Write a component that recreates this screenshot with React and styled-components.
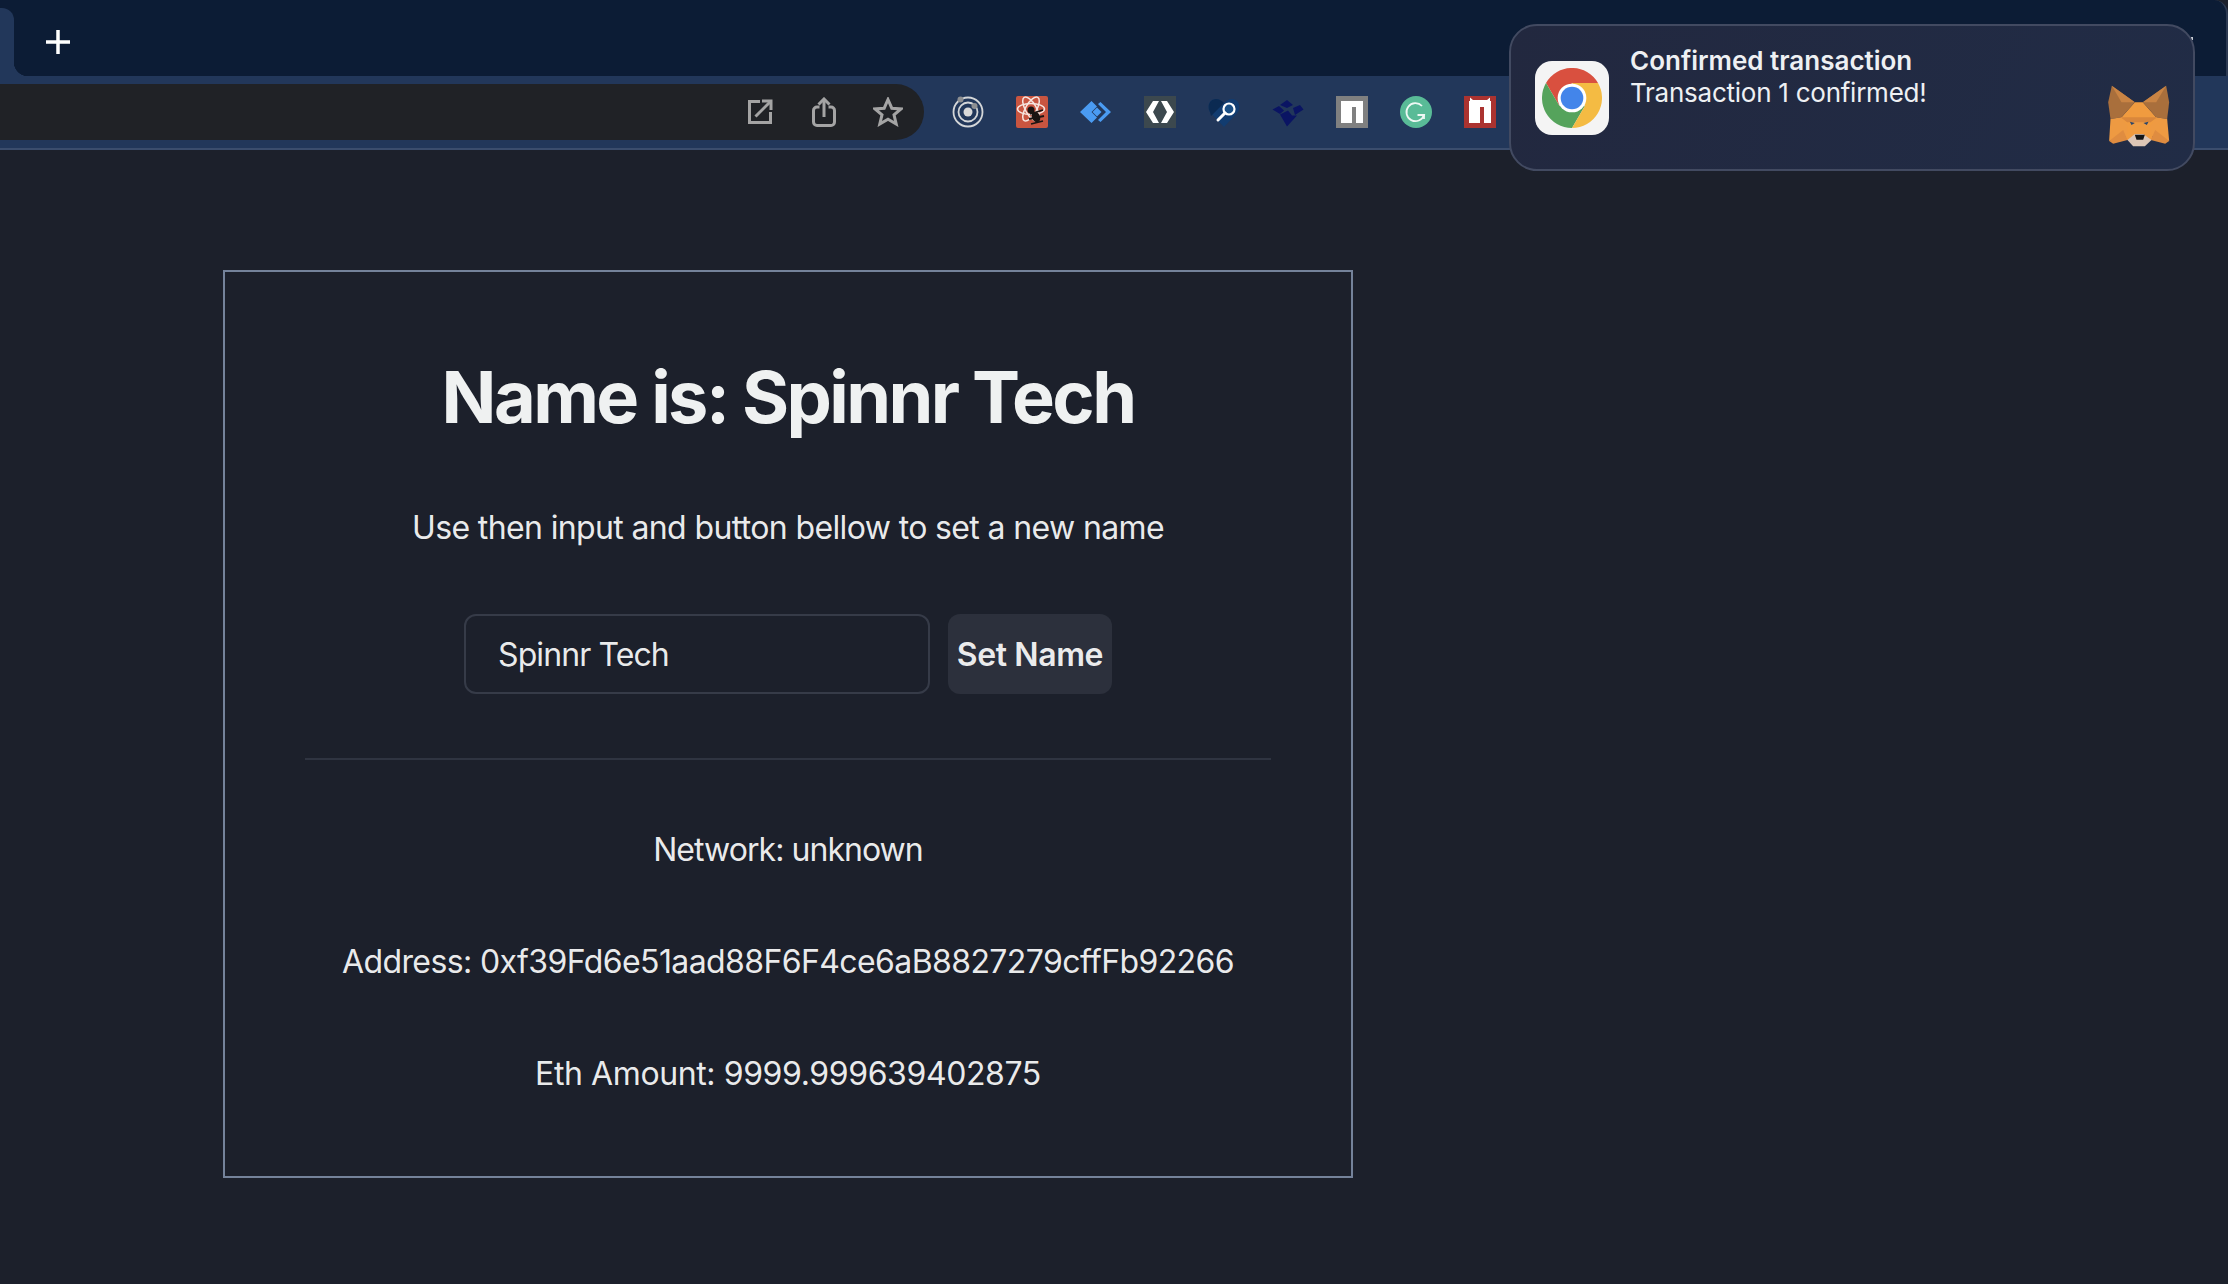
import React from "react";
import styled, { createGlobalStyle } from "styled-components";

const GlobalStyle = createGlobalStyle`
  html, body {
    margin: 0;
    padding: 0;
    background: #1c202b;
  }
  * {
    box-sizing: border-box;
  }
`;

function OpenIcon() {
  return (
    <ToolSvg width="26" height="26" viewBox="0 0 26 26">
      <path d="M13 2.5H2.5V23.5H23.5V13" />
      <path d="M8.5 17.5L23 3" />
      <path d="M15 2H24V11" />
    </ToolSvg>
  );
}

function ShareIcon() {
  return (
    <ToolSvg width="24" height="30" viewBox="0 0 24 30">
      <path d="M7.5 10H5a3.5 3.5 0 0 0-3.5 3.5V25A3.5 3.5 0 0 0 5 28.5H19a3.5 3.5 0 0 0 3.5-3.5V13.5A3.5 3.5 0 0 0 19 10H16.5" />
      <path d="M12 20V2" />
      <path d="M6.5 7.5L12 2L17.5 7.5" />
    </ToolSvg>
  );
}

function StarIcon() {
  return (
    <ToolSvg width="30" height="30" viewBox="0 0 30 30">
      <path d="M15 2.5L18.8 11.2L28 11.9L21 17.9L23.2 27L15 22.2L6.8 27L9 17.9L2 11.9L11.2 11.2Z" />
    </ToolSvg>
  );
}

function TargetExt() {
  return (
    <svg width="32" height="32" viewBox="0 0 32 32">
      <circle cx="16" cy="16" r="14.5" fill="none" stroke="#d4d6d8" strokeWidth="1.8" />
      <circle cx="16" cy="16" r="9.5" fill="none" stroke="#d4d6d8" strokeWidth="1.8" />
      <circle cx="16" cy="16" r="4.5" fill="#d9d9d9" />
      <circle cx="8.5" cy="3.5" r="3" fill="#8d8f92" />
      <circle cx="22.5" cy="10" r="3" fill="#8d8f92" />
    </svg>
  );
}

function ReactBugExt() {
  return (
    <svg width="32" height="32" viewBox="0 0 32 32">
      <rect width="32" height="32" rx="2" fill="#c95540" />
      <g fill="none" stroke="#f6e6e0" strokeWidth="1.5">
        <ellipse cx="15" cy="13" rx="13.5" ry="5.5" />
        <ellipse cx="15" cy="13" rx="13.5" ry="5.5" transform="rotate(60 15 13)" />
        <ellipse cx="15" cy="13" rx="13.5" ry="5.5" transform="rotate(120 15 13)" />
      </g>
      <circle cx="15" cy="14" r="3.5" fill="#1a1412" />
      <ellipse cx="20" cy="21" rx="4" ry="5.5" fill="#1a1412" transform="rotate(-25 20 21)" />
      <g stroke="#1a1412" strokeWidth="1.8">
        <path d="M14 18L27 14" />
        <path d="M13 23L28 20" />
        <path d="M15 28L27 25" />
      </g>
    </svg>
  );
}

function DiamondExt() {
  return (
    <svg width="32" height="32" viewBox="0 0 32 32">
      <path d="M0 16L11.5 5L17 10.5L11.5 16L17 21.5L11.5 27Z" fill="#4a9bf2" />
      <path d="M18 8L20.5 6L31 16L20.500 26L18 24L26 16Z" fill="#4a9bf2" />
      <path d="M17 11.5L21.5 16L17 20.5L12.5 16Z" fill="#4a9bf2" />
    </svg>
  );
}

function ChevronsExt() {
  return (
    <svg width="32" height="32" viewBox="0 0 32 32">
      <rect width="32" height="32" fill="#3c484e" />
      <path d="M2 16L9 5H15L9 16L15 27H9Z" fill="#fff" />
      <path d="M30 16L23 5H17L23 16L17 27H23Z" fill="#fff" />
    </svg>
  );
}

function HeartExt() {
  return (
    <svg width="32" height="32" viewBox="0 0 32 32">
      <path d="M16 31L2 16C-1 11 1 3 8 3C11 3 14 5 16 7C18 5 21 3 24 3C31 3 33 11 30 16Z" fill="#123c70" />
      <path d="M8 3C11 3 14 5 16 7L3 20L2 16C-1 11 1 3 8 3Z" fill="#0b2a52" />
      <circle cx="21" cy="13" r="5.5" fill="#1a4f86" stroke="#fff" strokeWidth="2.2" />
      <path d="M17 17L10 24" stroke="#fff" strokeWidth="3" strokeLinecap="round" />
    </svg>
  );
}

function FederalExt() {
  return (
    <svg width="32" height="32" viewBox="0 0 32 32">
      <path d="M8 9L15 4L21 9L15 12Z" fill="#0a1463" />
      <path d="M21 12L28 9L31.5 13.5L23 19Z" fill="#0a1463" />
      <path d="M0.5 13.5L7 10L12 14.5L8 18Z" fill="#0a1463" />
      <path d="M8 18.5L16 14.5L20 19.5H25L15 30.5Z" fill="#0a1463" />
    </svg>
  );
}

function NpmExt({ bg, ears }) {
  return (
    <svg width="32" height="32" viewBox="0 0 32 32">
      <rect width="32" height="32" fill={bg} />
      <path d="M5 27V5H27V27H20V11H16V27Z" fill="#fff" />
      {ears && <path d="M6 6V1.5L9 4H23L26 1.5V6Z" fill="#fff" />}
    </svg>
  );
}

function GrammarlyExt() {
  return (
    <svg width="32" height="32" viewBox="0 0 32 32">
      <circle cx="16" cy="16" r="16" fill="#59bb97" />
      <path d="M22 10A9 9 0 1 0 24 19H17.5" fill="none" stroke="#eef8f4" strokeWidth="1.8" />
      <path d="M24 23V19H20" fill="none" stroke="#eef8f4" strokeWidth="1.8" />
    </svg>
  );
}

function ChromeLogo() {
  return (
    <svg width="60" height="60" viewBox="18 15 180 180">
      <path d="M186 60A90 90 0 0 0 30 60L70 128L108 60Z" fill="#d9503f" />
      <path d="M30 60A90 90 0 0 0 108 195L147 128L70 128Z" fill="#55a35c" />
      <path d="M108 195A90 90 0 0 0 186 60L108 60L147 128Z" fill="#f4bb43" />
      <circle cx="108" cy="105" r="43" fill="#fff" />
      <circle cx="108" cy="105" r="34" fill="#4385ea" />
    </svg>
  );
}

function FoxLogo() {
  return (
    <svg width="64" height="62" viewBox="85 48 185 186">
      <path d="M125 145L165 100H189L229 145L232 165L215 213H140L122 165Z" fill="#f09b3f" />
      <path d="M96 50L165 100L125 145L92 150L85 100Z" fill="#a96f3c" />
      <path d="M96 50L165 100L125 100Z" fill="#c98444" />
      <path d="M259 50L189 100L229 145L262 150L268 100Z" fill="#a96f3c" />
      <path d="M259 50L189 100L229 100Z" fill="#c98444" />
      <path d="M92 150L125 145L142 170L142 196L88 216Z" fill="#ee9a42" />
      <path d="M262 150L229 145L212 170L212 196L268 216Z" fill="#ee9a42" />
      <path d="M88 216L130 183L143 213L100 224Z" fill="#df8c40" />
      <path d="M268 216L226 183L213 213L256 224Z" fill="#df8c40" />
      <path d="M122 145H232L212 160H142Z" fill="#d9873c" />
      <path d="M150 158L165 162L155 168Z" fill="#29456b" />
      <path d="M206 158L191 162L201 168Z" fill="#29456b" />
      <path d="M143 213L165 195H190L215 213L195 232H160Z" fill="#dcc6b6" />
      <path d="M165 197H195L190 212H170Z" fill="#161616" />
    </svg>
  );
}

export default function App() {
  return (
    <>
      <GlobalStyle />
      <Screen>
        <TabStrip>
          <ActiveTabEdge />
          <NewTabButton>
            <svg width="24" height="24" viewBox="0 0 24 24">
              <path d="M12 0V24M0 12H24" stroke="#fff" strokeWidth="3.5" />
            </svg>
          </NewTabButton>
        </TabStrip>
        <Toolbar>
          <AddressBar>
            <AddressIcon><OpenIcon /></AddressIcon>
            <AddressIcon><ShareIcon /></AddressIcon>
            <AddressIcon><StarIcon /></AddressIcon>
          </AddressBar>
          <Extensions>
            <Extension><TargetExt /></Extension>
            <Extension><ReactBugExt /></Extension>
            <Extension><DiamondExt /></Extension>
            <Extension><ChevronsExt /></Extension>
            <Extension><HeartExt /></Extension>
            <Extension><FederalExt /></Extension>
            <Extension><NpmExt bg="#808080" /></Extension>
            <Extension><GrammarlyExt /></Extension>
            <Extension><NpmExt bg="#ab3330" ears /></Extension>
          </Extensions>
        </Toolbar>
        <Main>
          <Card>
            <Title>Name is: Spinnr Tech</Title>
            <Text $tracking={-0.63}>Use then input and button bellow to set a new name</Text>
            <Form>
              <NameInput defaultValue="Spinnr Tech" />
              <SetButton type="button">Set Name</SetButton>
            </Form>
            <Divider />
            <Text $tracking={-0.95}>Network: unknown</Text>
            <Text $tracking={-0.6}>Address: 0xf39Fd6e51aad88F6F4ce6aB8827279cffFb92266</Text>
            <Text $tracking={-0.4}>Eth Amount: 9999.999639402875</Text>
          </Card>
        </Main>
        <Notification>
          <AppIcon><ChromeLogo /></AppIcon>
          <NotificationBody>
            <NotificationTitle>Confirmed transaction</NotificationTitle>
            <NotificationText>Transaction 1 confirmed!</NotificationText>
          </NotificationBody>
          <FoxSlot><FoxLogo /></FoxSlot>
        </Notification>
      </Screen>
    </>
  );
}

const Screen = styled.div`
  position: relative;
  width: 2228px;
  height: 1284px;
  overflow: hidden;
  display: flex;
  flex-direction: column;
  background: #1c202b;
  font-family: Inter, "Liberation Sans", sans-serif;

  &::before {
    content: "";
    position: absolute;
    left: 2191px;
    top: 37px;
    width: 2px;
    height: 3px;
    background: #c9ced6;
  }
`;

const TabStrip = styled.div`
  height: 76px;
  flex-shrink: 0;
  display: flex;
  background: #0c1c35;
  border-right: 2px solid #2d3a52;
  border-top-right-radius: 14px;
`;

const ActiveTabEdge = styled.div`
  position: relative;
  width: 14px;
  margin-top: 8px;
  background: #22375a;
  border-top-right-radius: 12px;

  &::after {
    content: "";
    position: absolute;
    left: 14px;
    bottom: 0;
    width: 14px;
    height: 14px;
    background: radial-gradient(circle at 100% 0, transparent 14px, #22375a 14.5px);
  }
`;

const NewTabButton = styled.div`
  margin-left: 32px;
  display: flex;
  align-items: center;
  padding-top: 8px;
`;

const Toolbar = styled.div`
  height: 74px;
  flex-shrink: 0;
  display: flex;
  padding-top: 8px;
  background: #22375a;
  border-bottom: 2px solid #3b4d6d;
`;

const AddressBar = styled.div`
  width: 924px;
  height: 56px;
  display: flex;
  justify-content: flex-end;
  padding-right: 4px;
  background: #202226;
  border-radius: 0 28px 28px 0;
`;

const AddressIcon = styled.div`
  width: 64px;
  display: flex;
  align-items: center;
  justify-content: center;
`;

const ToolSvg = styled.svg`
  fill: none;
  stroke: #a4a4a4;
  stroke-width: 3;
`;

const Extensions = styled.div`
  display: flex;
  height: 56px;
  margin-left: 12px;
`;

const Extension = styled.div`
  width: 64px;
  display: flex;
  align-items: center;
  justify-content: center;
`;

const Main = styled.main`
  flex: 1;
  padding: 120px 0 0 223px;
`;

const Card = styled.section`
  width: 1130px;
  display: flex;
  flex-direction: column;
  gap: 64px;
  padding: 80px;
  border: 2px solid #74829a;
  color: rgba(255, 255, 255, 0.92);
  text-align: center;
`;

const Title = styled.h1`
  margin: 0;
  padding-top: 3px;
  font-size: 72px;
  line-height: 83px;
  font-weight: 700;
  letter-spacing: -2.55px;
  color: #eff1f1;
`;

const Text = styled.p`
  margin: 0;
  padding-top: 3px;
  font-size: 32px;
  line-height: 45px;
  font-weight: 400;
  letter-spacing: ${(p) => p.$tracking}px;
`;

const Form = styled.div`
  display: flex;
  justify-content: center;
  gap: 18px;
  height: 80px;
`;

const NameInput = styled.input`
  width: 466px;
  height: 80px;
  padding: 0 32px;
  background: transparent;
  border: 2px solid #363b48;
  border-radius: 12px;
  outline: none;
  font-family: inherit;
  font-size: 32px;
  letter-spacing: -0.9px;
  color: rgba(255, 255, 255, 0.92);
`;

const SetButton = styled.button`
  width: 164px;
  height: 80px;
  padding: 0;
  border: none;
  border-radius: 12px;
  background: #2c303c;
  font-family: inherit;
  font-size: 32px;
  font-weight: 600;
  letter-spacing: -0.4px;
  color: rgba(255, 255, 255, 0.92);
`;

const Divider = styled.hr`
  width: 100%;
  height: 2px;
  margin: 0;
  border: none;
  background: #2f3441;
`;

const Notification = styled.aside`
  position: absolute;
  top: 24px;
  right: 33px;
  width: 686px;
  height: 147px;
  display: flex;
  padding: 35px 22px 22px 24px;
  background: linear-gradient(115deg, #22283f, #212c46);
  border: 2px solid #424a61;
  border-radius: 28px;
`;

const AppIcon = styled.div`
  width: 74px;
  height: 74px;
  flex-shrink: 0;
  display: flex;
  align-items: center;
  justify-content: center;
  background: #f4f4f4;
  border-radius: 17px;
`;

const NotificationBody = styled.div`
  margin: -16px 0 0 21px;
  flex: 1;
  color: #eef0f3;
  font-size: 26px;
  line-height: 32px;
`;

const NotificationTitle = styled.div`
  font-weight: 600;
`;

const NotificationText = styled.div`
  font-weight: 400;
  letter-spacing: -0.25px;
`;

const FoxSlot = styled.div`
  align-self: flex-end;
  display: flex;
`;
